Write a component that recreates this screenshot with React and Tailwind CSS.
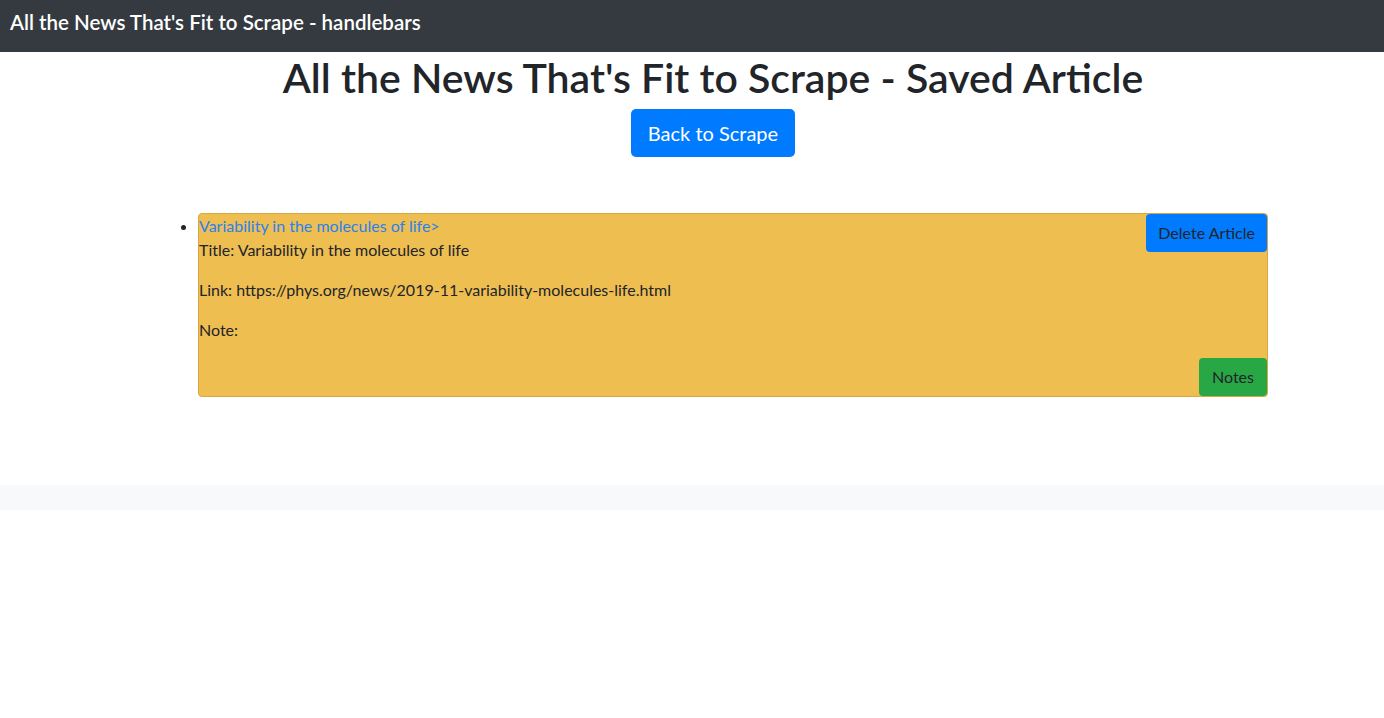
import React from "react";

export default function App() {
  return (
    <div className="min-h-[718px] bg-white text-[#212529] font-['Lato',_'Noto_Sans',_sans-serif]">
      {/* Navbar */}
      <nav className="h-[52px] bg-[#343a40] flex items-start pt-[7px] px-[10px]">
        <span className="text-white text-[20.5px] font-semibold leading-[30px]">
          All the News That's Fit to Scrape - handlebars
        </span>
      </nav>

      {/* Heading */}
      <div className="flex flex-col items-center pl-[42px]">
        <h1 className="text-[41px] font-semibold leading-[48px] mt-[2px] mb-[7px]">
          All the News That's Fit to Scrape - Saved Article
        </h1>
        <button className="h-[48px] px-[17px] rounded-[5px] bg-[#007bff] text-white text-[20px] leading-[30px]">
          Back to Scrape
        </button>
      </div>

      {/* Saved articles */}
      <ul className="list-disc pl-[198px] mt-[56px]">
        <li className="w-[1070px] marker:text-[#212529]">
          <div className="bg-[#efbe50] border border-[#d7a83f] rounded-[4px] text-[16px] leading-[24px] flow-root">
            <button className="float-right h-[38px] px-[12px] rounded-[4px] bg-[#007bff] text-[#212529] text-[16px]">
              Delete Article
            </button>
            <a className="text-[#2a82f0] block">Variability in the molecules of life&gt;</a>
            <p className="mb-[16px]">Title: Variability in the molecules of life</p>
            <p className="mb-[16px]">Link: https://phys.org/news/2019-11-variability-molecules-life.html</p>
            <p className="mb-[16px]">Note:</p>
            <button className="float-right h-[38px] px-[13px] rounded-[4px] bg-[#28a745] text-[#212529] text-[16px]">
              Notes
            </button>
          </div>
        </li>
      </ul>

      {/* Footer */}
      <footer className="mt-[88px] h-[25px] bg-[#f8f9fa]" />
    </div>
  );
}
